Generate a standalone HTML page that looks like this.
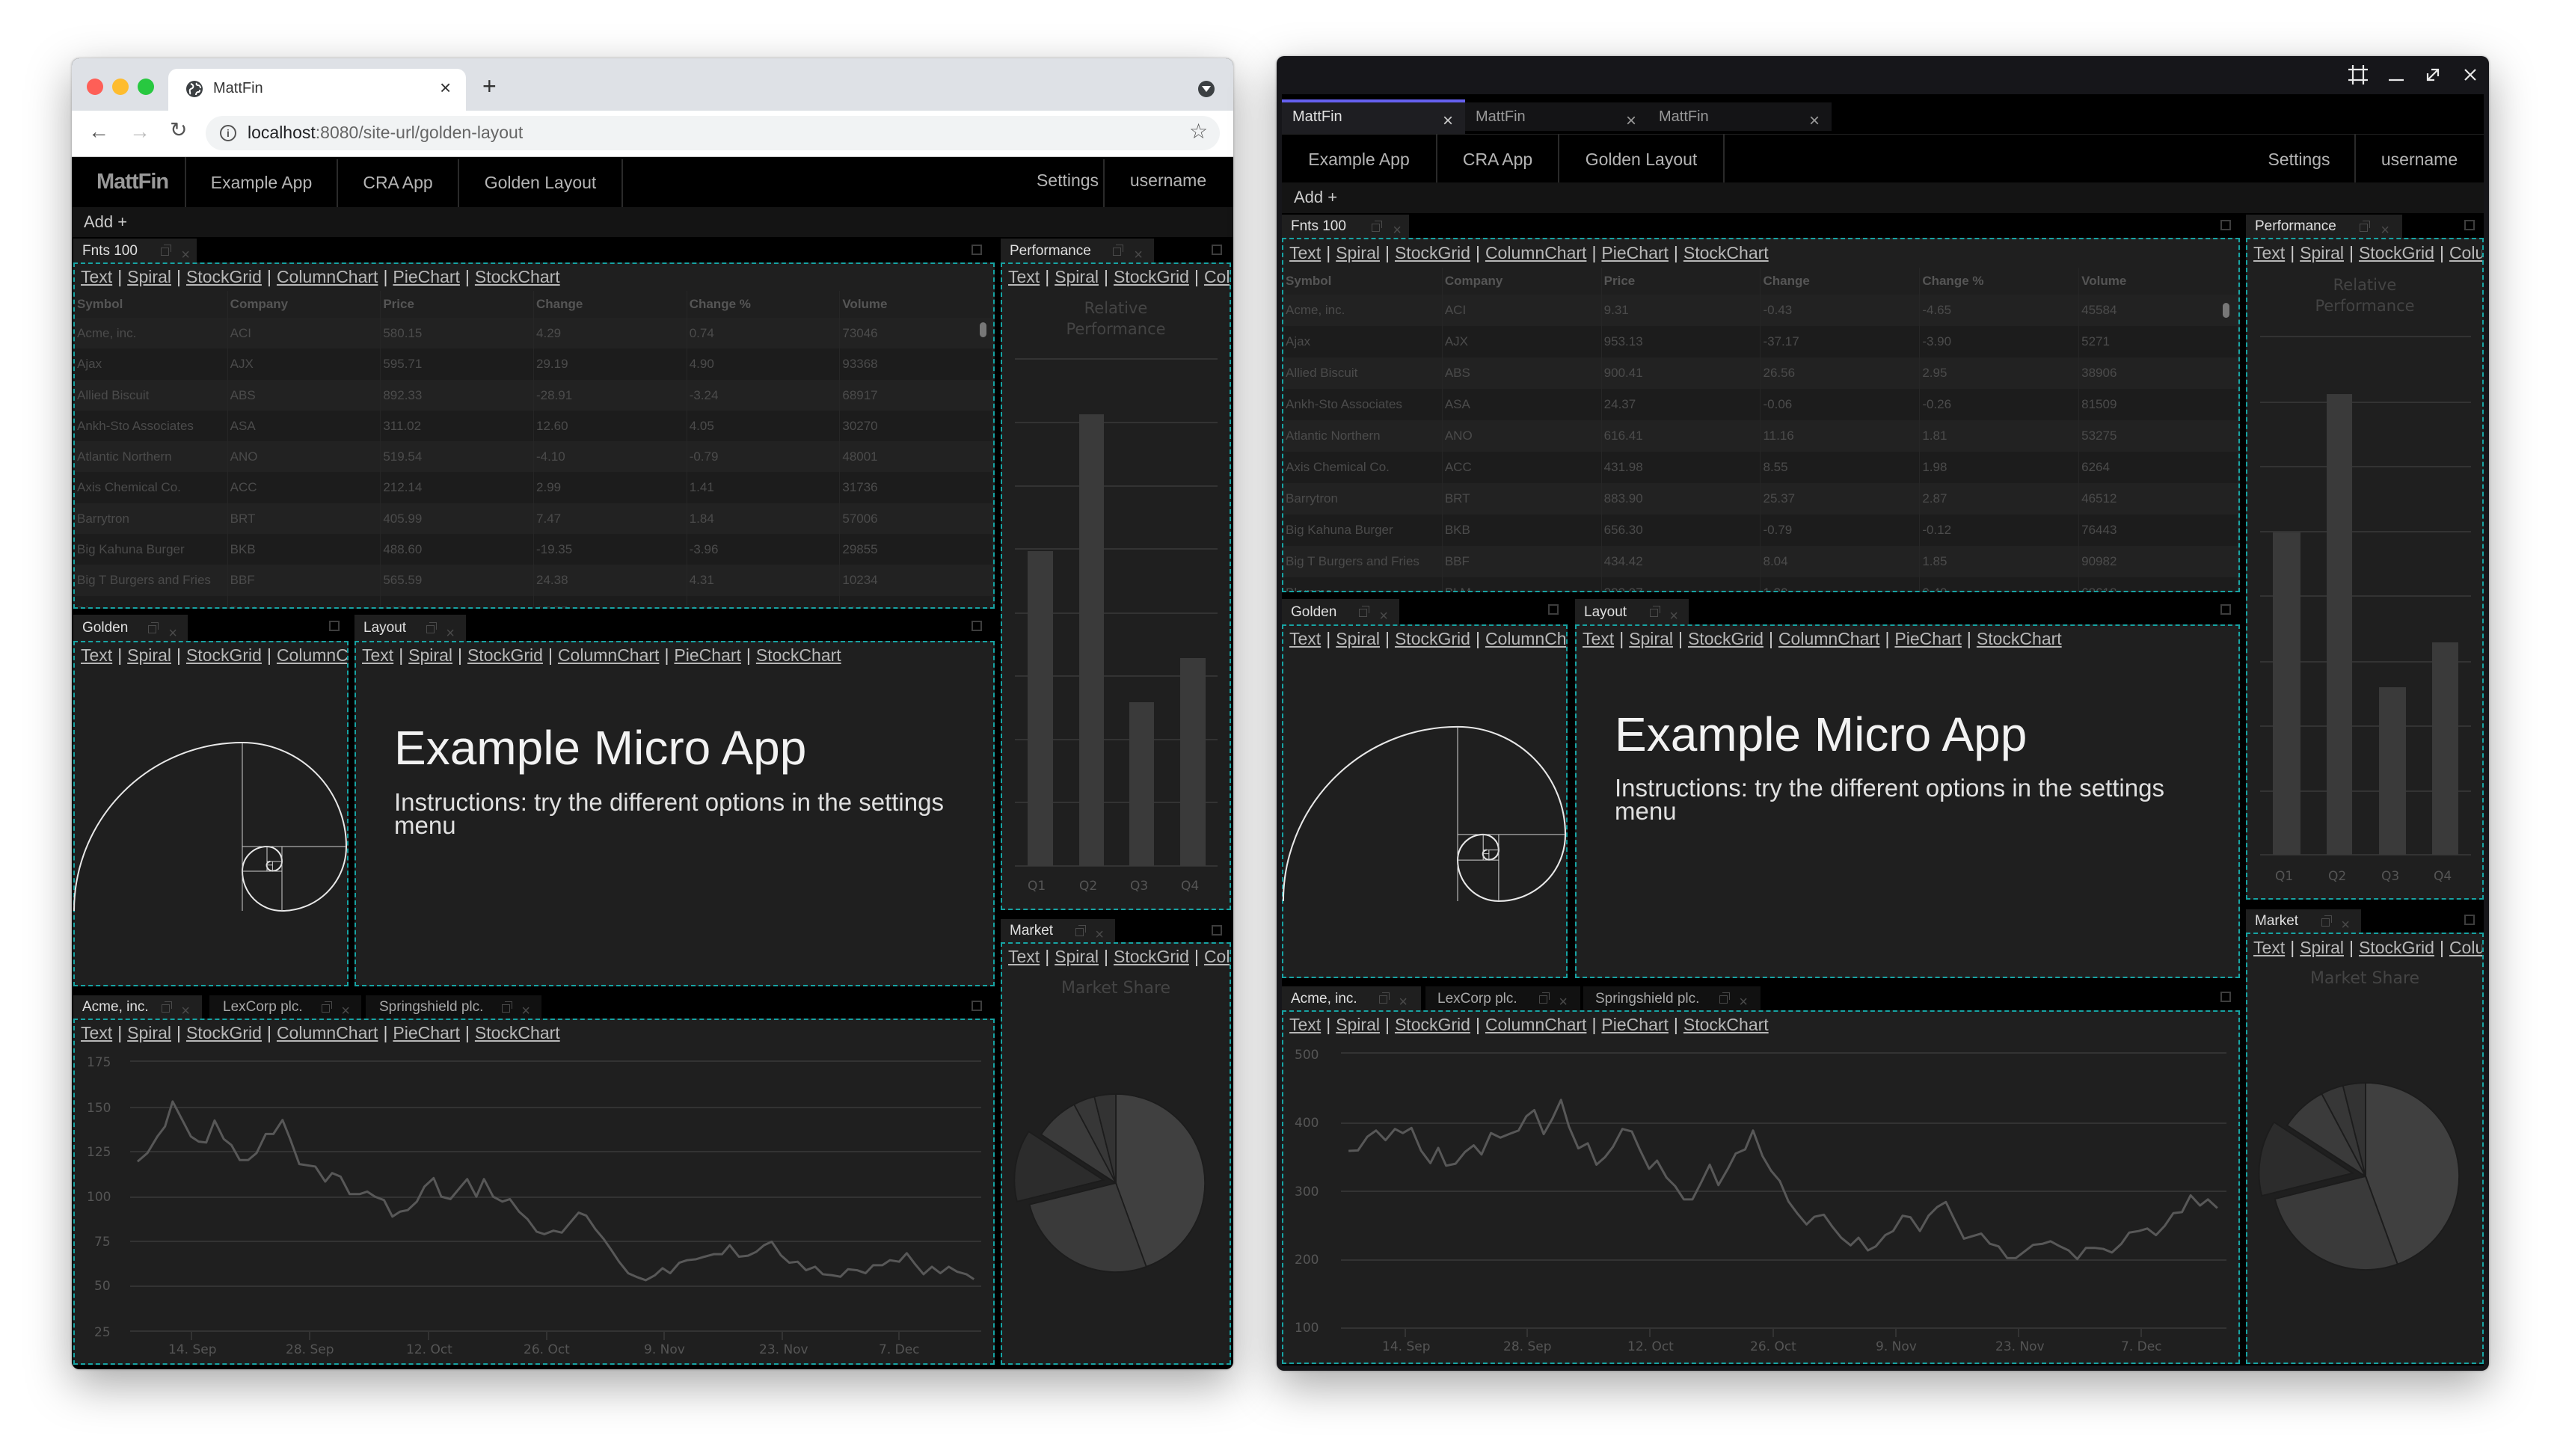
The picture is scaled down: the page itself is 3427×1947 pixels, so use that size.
<!DOCTYPE html>
<html><head><meta charset="utf-8"><style>
*{margin:0;padding:0;box-sizing:border-box}
body{width:3427px;height:1947px;background:#fff;position:relative;overflow:hidden;font-family:"Liberation Sans",Arial,sans-serif}
.a{position:absolute}
.t{position:absolute;white-space:nowrap;line-height:1}
.win{position:absolute;overflow:hidden;box-shadow:0 20px 60px rgba(0,0,0,.35),0 0 3px rgba(0,0,0,.3)}
.pc{position:absolute;background:#1f1f1f;border:2px dashed #17a3a3;overflow:hidden}
.tb{position:absolute;background:#1f1f1f;color:#e0e0e0;font-size:19px;padding-left:12px;white-space:nowrap;overflow:hidden}
.tb.in{background:#111;color:#a8a8a8}
.po{position:absolute;width:11px;height:11px;border:1.5px solid #4a4a4a;top:50%;margin-top:-4px}
.po:after{content:"";position:absolute;left:3px;top:-5px;width:9px;height:9px;border-top:1.5px solid #4a4a4a;border-right:1.5px solid #4a4a4a}
.xx{position:absolute;color:#4a4a4a;font-size:20px;top:50%;margin-top:-11px}
.mx{position:absolute;width:14px;height:14px;border:2px solid #3d3d3d}
.lk{position:absolute;left:8px;top:4px;font-size:23px;line-height:26px;color:#b8b8b8;white-space:nowrap}
.lk u{text-decoration:underline}
.lk s{text-decoration:none;margin:0 7px;color:#ccc}
.nav{position:absolute;color:#b5b5b5;font-size:23px;white-space:nowrap;text-align:center}
.sep{position:absolute;width:2px;background:#2a2a2a}
.grid{position:absolute;left:0;right:0;top:36px;font-size:17px;color:#4b4b4b}
.grid .r{display:flex;height:41.3px;line-height:41.3px}
.grid .r:nth-child(odd){background:#1c1c1c}
.grid .r:nth-child(even){background:#222}
.grid .r.h{height:36px;line-height:36px;background:#1f1f1f;color:#555;font-weight:bold}
.grid .r span{flex:1;padding-left:3px;border-right:1px solid #262626;white-space:nowrap;overflow:hidden}
.g2 .r{height:42px;line-height:42px}
.emt{position:absolute;left:51px;font-size:64px;color:#f2f2f2;white-space:nowrap}
.ins{position:absolute;left:51px;width:780px;font-size:33px;line-height:31px;color:#e0e0e0}
.rp{position:absolute;left:0;right:0;text-align:center;font-family:"DejaVu Sans",sans-serif;font-size:21px;line-height:28px;color:#444}
.ax{position:absolute;font-family:"DejaVu Sans",sans-serif;font-size:17px;color:#555;white-space:nowrap}
</style></head><body>

<!-- ================= LEFT WINDOW ================= -->
<div class="win" style="left:96px;top:78px;width:1553px;height:1753px;border-radius:10px;background:#000"></div>
<div class="a" style="left:96px;top:78px;width:1553px;height:70px;background:#dee1e6;border-radius:10px 10px 0 0"></div>
<div class="a" style="left:116px;top:105px;width:22px;height:22px;border-radius:50%;background:#fe5f57"></div>
<div class="a" style="left:150px;top:105px;width:22px;height:22px;border-radius:50%;background:#febc2e"></div>
<div class="a" style="left:184px;top:105px;width:22px;height:22px;border-radius:50%;background:#28c840"></div>
<div class="a" style="left:225px;top:92px;width:398px;height:56px;background:#fff;border-radius:12px 12px 0 0"></div>
<svg class="a" style="left:247px;top:106px" width="26" height="26" viewBox="0 0 26 26"><circle cx="13" cy="13" r="11" fill="#3c4043"/><path d="M8 6c3 1 4 3 3 5s-3 1-4 3 1 4 0 6M16 5c-1 2 0 3 2 3s3 2 3 4M15 21c0-2 1-4 3-4s2-1 2-3" stroke="#fff" stroke-width="2" fill="none"/></svg>
<div class="t" style="left:285px;top:108px;font-size:20px;color:#333">MattFin</div>
<div class="t" style="left:588px;top:104px;font-size:26px;color:#333">×</div>
<div class="t" style="left:645px;top:99px;font-size:32px;color:#333">+</div>
<div class="a" style="left:1602px;top:108px;width:22px;height:22px;border-radius:50%;background:#3c4043"></div>
<div class="a" style="left:1607px;top:115px;width:0;height:0;border-left:6px solid transparent;border-right:6px solid transparent;border-top:8px solid #fff"></div>
<div class="a" style="left:96px;top:148px;width:1553px;height:62px;background:#fff;border-bottom:1px solid #ccc"></div>
<div class="t" style="left:118px;top:162px;font-size:28px;color:#555">←</div>
<div class="t" style="left:173px;top:162px;font-size:28px;color:#bbb">→</div>
<div class="t" style="left:227px;top:160px;font-size:28px;color:#555">↻</div>
<div class="a" style="left:275px;top:155px;width:1356px;height:46px;background:#f1f3f4;border-radius:23px"></div>
<div class="a" style="left:294px;top:167px;width:22px;height:22px;border-radius:50%;border:2px solid #555;color:#555;font-size:14px;text-align:center;line-height:18px;font-weight:bold">i</div>
<div class="t" style="left:331px;top:166px;font-size:23px;color:#202124">localhost<span style="color:#666">:8080/site-url/golden-layout</span></div>
<div class="t" style="left:1590px;top:162px;font-size:28px;color:#555">☆</div>
<!-- nav -->
<div class="a" style="left:96px;top:210px;width:1553px;height:67px;background:#000"></div>
<div class="t" style="left:129px;top:229px;font-size:29px;font-weight:bold;color:#999;font-family:'Liberation Sans Narrow','Liberation Sans',sans-serif;letter-spacing:-1px">MattFin</div>
<div class="sep" style="left:247px;top:210px;height:67px"></div>
<div class="sep" style="left:450px;top:213px;height:64px"></div>
<div class="sep" style="left:612px;top:213px;height:64px"></div>
<div class="sep" style="left:831px;top:213px;height:64px"></div>
<div class="sep" style="left:1475px;top:213px;height:64px"></div>
<div class="nav" style="left:249px;width:201px;top:231px">Example App</div>
<div class="nav" style="left:452px;width:160px;top:231px">CRA App</div>
<div class="nav" style="left:614px;width:217px;top:231px">Golden Layout</div>
<div class="nav" style="left:1380px;width:95px;top:228px">Settings</div>
<div class="nav" style="left:1477px;width:170px;top:228px">username</div>
<div class="a" style="left:96px;top:277px;width:1553px;height:40px;background:#141414"></div>
<div class="t" style="left:112px;top:286px;font-size:22px;color:#ccc">Add +</div>

<!-- left panels -->
<div class="tb" style="left:98px;top:319px;width:165px;height:32px;line-height:34px">Fnts 100<i class="po" style="left:117px"></i><i class="xx" style="left:144px">×</i></div>
<div class="mx" style="left:1299px;top:327px"></div>
<div class="pc" style="left:98px;top:351px;width:1232px;height:463px">
<div class="lk"><u>Text</u><s>|</s><u>Spiral</u><s>|</s><u>StockGrid</u><s>|</s><u>ColumnChart</u><s>|</s><u>PieChart</u><s>|</s><u>StockChart</u></div>
<div class="grid">
<div class="r h"><span>Symbol</span><span>Company</span><span>Price</span><span>Change</span><span>Change %</span><span>Volume</span></div>
<div class="r"><span>Acme, inc.</span><span>ACI</span><span>580.15</span><span>4.29</span><span>0.74</span><span>73046</span></div>
<div class="r"><span>Ajax</span><span>AJX</span><span>595.71</span><span>29.19</span><span>4.90</span><span>93368</span></div>
<div class="r"><span>Allied Biscuit</span><span>ABS</span><span>892.33</span><span>-28.91</span><span>-3.24</span><span>68917</span></div>
<div class="r"><span>Ankh-Sto Associates</span><span>ASA</span><span>311.02</span><span>12.60</span><span>4.05</span><span>30270</span></div>
<div class="r"><span>Atlantic Northern</span><span>ANO</span><span>519.54</span><span>-4.10</span><span>-0.79</span><span>48001</span></div>
<div class="r"><span>Axis Chemical Co.</span><span>ACC</span><span>212.14</span><span>2.99</span><span>1.41</span><span>31736</span></div>
<div class="r"><span>Barrytron</span><span>BRT</span><span>405.99</span><span>7.47</span><span>1.84</span><span>57006</span></div>
<div class="r"><span>Big Kahuna Burger</span><span>BKB</span><span>488.60</span><span>-19.35</span><span>-3.96</span><span>29855</span></div>
<div class="r"><span>Big T Burgers and Fries</span><span>BBF</span><span>565.59</span><span>24.38</span><span>4.31</span><span>10234</span></div>
<div class="r"><span>Blammo</span><span>BLM</span><span>285.08</span><span>27.75</span><span>4.35</span><span>60099</span></div>
</div>
<div class="a" style="left:1210px;top:78px;width:9px;height:20px;border-radius:5px;background:#777"></div>
</div>

<div class="tb" style="left:1338px;top:319px;width:205px;height:32px;line-height:34px">Performance<i class="po" style="left:150px"></i><i class="xx" style="left:178px">×</i></div>
<div class="mx" style="left:1620px;top:327px"></div>
<div class="pc" style="left:1338px;top:351px;width:308px;height:866px">
<div class="lk"><u>Text</u><s>|</s><u>Spiral</u><s>|</s><u>StockGrid</u><s>|</s><u>ColumnChart</u></div>
<div class="rp" style="top:45px">Relative<br>Performance</div>
<div class="ax" style="left:34px;top:822px">Q1</div><div class="ax" style="left:103px;top:822px">Q2</div><div class="ax" style="left:171px;top:822px">Q3</div><div class="ax" style="left:239px;top:822px">Q4</div>
</div>

<div class="tb" style="left:98px;top:822px;width:153px;height:35px;line-height:36px">Golden<i class="po" style="left:100px"></i><i class="xx" style="left:127px">×</i></div>
<div class="mx" style="left:440px;top:830px"></div>
<div class="pc" style="left:98px;top:857px;width:368px;height:462px">
<div class="lk"><u>Text</u><s>|</s><u>Spiral</u><s>|</s><u>StockGrid</u><s>|</s><u>ColumnChart</u></div>
</div>
<div class="tb" style="left:474px;top:822px;width:149px;height:35px;line-height:36px">Layout<i class="po" style="left:96px"></i><i class="xx" style="left:122px">×</i></div>
<div class="mx" style="left:1299px;top:830px"></div>
<div class="pc" style="left:474px;top:857px;width:856px;height:462px">
<div class="lk"><u>Text</u><s>|</s><u>Spiral</u><s>|</s><u>StockGrid</u><s>|</s><u>ColumnChart</u><s>|</s><u>PieChart</u><s>|</s><u>StockChart</u></div>
<div class="emt" style="top:104px">Example Micro App</div>
<div class="ins" style="top:198px">Instructions: try the different options in the settings menu</div>
</div>

<div class="tb" style="left:98px;top:1331px;width:172px;height:31px;line-height:32px">Acme, inc.<i class="po" style="left:118px"></i><i class="xx" style="left:144px">×</i></div>
<div class="tb in" style="left:280px;top:1331px;width:203px;height:31px;line-height:32px;padding-left:18px">LexCorp plc.<i class="po" style="left:150px"></i><i class="xx" style="left:176px">×</i></div>
<div class="tb in" style="left:489px;top:1331px;width:235px;height:31px;line-height:32px;padding-left:18px">Springshield plc.<i class="po" style="left:182px"></i><i class="xx" style="left:208px">×</i></div>
<div class="mx" style="left:1299px;top:1338px"></div>
<div class="pc" style="left:98px;top:1362px;width:1232px;height:463px">
<div class="lk"><u>Text</u><s>|</s><u>Spiral</u><s>|</s><u>StockGrid</u><s>|</s><u>ColumnChart</u><s>|</s><u>PieChart</u><s>|</s><u>StockChart</u></div>
</div>
<div class="ax" style="left:116px;top:1411px">175</div><div class="ax" style="left:116px;top:1472px">150</div><div class="ax" style="left:116px;top:1531px">125</div><div class="ax" style="left:116px;top:1591px">100</div><div class="ax" style="left:126px;top:1651px">75</div><div class="ax" style="left:126px;top:1710px">50</div><div class="ax" style="left:126px;top:1772px">25</div>
<div class="ax" style="left:225px;top:1795px">14. Sep</div><div class="ax" style="left:382px;top:1795px">28. Sep</div><div class="ax" style="left:543px;top:1795px">12. Oct</div><div class="ax" style="left:700px;top:1795px">26. Oct</div><div class="ax" style="left:861px;top:1795px">9. Nov</div><div class="ax" style="left:1015px;top:1795px">23. Nov</div><div class="ax" style="left:1175px;top:1795px">7. Dec</div>

<div class="tb" style="left:1338px;top:1229px;width:153px;height:31px;line-height:32px">Market<i class="po" style="left:100px"></i><i class="xx" style="left:126px">×</i></div>
<div class="mx" style="left:1620px;top:1237px"></div>
<div class="pc" style="left:1338px;top:1260px;width:308px;height:565px">
<div class="lk"><u>Text</u><s>|</s><u>Spiral</u><s>|</s><u>StockGrid</u><s>|</s><u>ColumnChart</u></div>
<div class="rp" style="top:46px;font-size:22px">Market Share</div>
</div>

<!-- ================= RIGHT WINDOW ================= -->
<div class="win" style="left:1707px;top:75px;width:1621px;height:1758px;border-radius:10px;background:#16161a"></div>
<div class="a" style="left:1714px;top:126px;width:1607px;height:1700px;background:#000"></div>
<svg class="a" style="left:3138px;top:85px" width="180" height="30" viewBox="0 0 180 30"><g stroke="#e8e8e8" stroke-width="2.2" fill="none"><path d="M8 2v26M22 2v26M2 8h26M2 22h26"/><path d="M56 22h20"/><path d="M108 22l14-14M113 8h9v9M108 13v9h9"/><path d="M158 8l14 14M172 8l-14 14"/></g></svg>
<div class="a" style="left:1714px;top:133px;width:245px;height:46px;background:#1e1e22;border-top:4px solid #6560f0"></div>
<div class="a" style="left:1959px;top:137px;width:490px;height:38px;background:#141416"></div>
<div class="t" style="left:1728px;top:146px;font-size:20px;color:#e0e0e0">MattFin</div>
<div class="t" style="left:1929px;top:150px;font-size:24px;color:#ccc">×</div>
<div class="t" style="left:1973px;top:146px;font-size:20px;color:#999">MattFin</div>
<div class="t" style="left:2174px;top:150px;font-size:24px;color:#999">×</div>
<div class="t" style="left:2218px;top:146px;font-size:20px;color:#999">MattFin</div>
<div class="t" style="left:2419px;top:150px;font-size:24px;color:#999">×</div>
<div class="a" style="left:1714px;top:179px;width:1607px;height:65px;background:#000;border-top:1px solid #222"></div>
<div class="sep" style="left:1920px;top:179px;height:65px"></div>
<div class="sep" style="left:2083px;top:179px;height:65px"></div>
<div class="sep" style="left:2304px;top:179px;height:65px"></div>
<div class="sep" style="left:3148px;top:179px;height:65px"></div>
<div class="nav" style="left:1714px;width:206px;top:200px">Example App</div>
<div class="nav" style="left:1922px;width:161px;top:200px">CRA App</div>
<div class="nav" style="left:2085px;width:219px;top:200px">Golden Layout</div>
<div class="nav" style="left:3010px;width:128px;top:200px">Settings</div>
<div class="nav" style="left:3150px;width:170px;top:200px">username</div>
<div class="a" style="left:1714px;top:244px;width:1607px;height:41px;background:#141414"></div>
<div class="t" style="left:1730px;top:253px;font-size:22px;color:#ccc">Add +</div>

<div class="tb" style="left:1714px;top:287px;width:170px;height:31px;line-height:32px">Fnts 100<i class="po" style="left:120px"></i><i class="xx" style="left:148px">×</i></div>
<div class="mx" style="left:2969px;top:294px"></div>
<div class="pc" style="left:1714px;top:318px;width:1281px;height:474px">
<div class="lk" style="top:5px"><u>Text</u><s>|</s><u>Spiral</u><s>|</s><u>StockGrid</u><s>|</s><u>ColumnChart</u><s>|</s><u>PieChart</u><s>|</s><u>StockChart</u></div>
<div class="grid g2" style="top:38px">
<div class="r h"><span>Symbol</span><span>Company</span><span>Price</span><span>Change</span><span>Change %</span><span>Volume</span></div>
<div class="r"><span>Acme, inc.</span><span>ACI</span><span>9.31</span><span>-0.43</span><span>-4.65</span><span>45584</span></div>
<div class="r"><span>Ajax</span><span>AJX</span><span>953.13</span><span>-37.17</span><span>-3.90</span><span>5271</span></div>
<div class="r"><span>Allied Biscuit</span><span>ABS</span><span>900.41</span><span>26.56</span><span>2.95</span><span>38906</span></div>
<div class="r"><span>Ankh-Sto Associates</span><span>ASA</span><span>24.37</span><span>-0.06</span><span>-0.26</span><span>81509</span></div>
<div class="r"><span>Atlantic Northern</span><span>ANO</span><span>616.41</span><span>11.16</span><span>1.81</span><span>53275</span></div>
<div class="r"><span>Axis Chemical Co.</span><span>ACC</span><span>431.98</span><span>8.55</span><span>1.98</span><span>6264</span></div>
<div class="r"><span>Barrytron</span><span>BRT</span><span>883.90</span><span>25.37</span><span>2.87</span><span>46512</span></div>
<div class="r"><span>Big Kahuna Burger</span><span>BKB</span><span>656.30</span><span>-0.79</span><span>-0.12</span><span>76443</span></div>
<div class="r"><span>Big T Burgers and Fries</span><span>BBF</span><span>434.42</span><span>8.04</span><span>1.85</span><span>90982</span></div>
<div class="r"><span>Blammo</span><span>BLM</span><span>323.97</span><span>1.30</span><span>0.40</span><span>68618</span></div>
</div>
<div class="a" style="left:1256px;top:85px;width:9px;height:20px;border-radius:5px;background:#777"></div>
</div>

<div class="tb" style="left:3003px;top:287px;width:209px;height:31px;line-height:32px">Performance<i class="po" style="left:152px"></i><i class="xx" style="left:180px">×</i></div>
<div class="mx" style="left:3295px;top:294px"></div>
<div class="pc" style="left:3003px;top:318px;width:318px;height:885px">
<div class="lk" style="top:5px"><u>Text</u><s>|</s><u>Spiral</u><s>|</s><u>StockGrid</u><s>|</s><u>ColumnChart</u></div>
<div class="rp" style="top:47px">Relative<br>Performance</div>
<div class="ax" style="left:37px;top:842px">Q1</div><div class="ax" style="left:108px;top:842px">Q2</div><div class="ax" style="left:179px;top:842px">Q3</div><div class="ax" style="left:249px;top:842px">Q4</div>
</div>

<div class="tb" style="left:1714px;top:801px;width:157px;height:34px;line-height:35px">Golden<i class="po" style="left:103px"></i><i class="xx" style="left:130px">×</i></div>
<div class="mx" style="left:2070px;top:808px"></div>
<div class="pc" style="left:1714px;top:835px;width:382px;height:473px">
<div class="lk"><u>Text</u><s>|</s><u>Spiral</u><s>|</s><u>StockGrid</u><s>|</s><u>ColumnChart</u></div>
</div>
<div class="tb" style="left:2106px;top:801px;width:152px;height:34px;line-height:35px">Layout<i class="po" style="left:100px"></i><i class="xx" style="left:126px">×</i></div>
<div class="mx" style="left:2969px;top:808px"></div>
<div class="pc" style="left:2106px;top:835px;width:889px;height:473px">
<div class="lk"><u>Text</u><s>|</s><u>Spiral</u><s>|</s><u>StockGrid</u><s>|</s><u>ColumnChart</u><s>|</s><u>PieChart</u><s>|</s><u>StockChart</u></div>
<div class="emt" style="top:108px">Example Micro App</div>
<div class="ins" style="top:201px">Instructions: try the different options in the settings menu</div>
</div>

<div class="tb" style="left:1714px;top:1319px;width:186px;height:32px;line-height:33px">Acme, inc.<i class="po" style="left:130px"></i><i class="xx" style="left:156px">×</i></div>
<div class="tb in" style="left:1906px;top:1319px;width:207px;height:32px;line-height:33px;padding-left:16px">LexCorp plc.<i class="po" style="left:152px"></i><i class="xx" style="left:178px">×</i></div>
<div class="tb in" style="left:2117px;top:1319px;width:237px;height:32px;line-height:33px;padding-left:16px">Springshield plc.<i class="po" style="left:182px"></i><i class="xx" style="left:208px">×</i></div>
<div class="mx" style="left:2969px;top:1326px"></div>
<div class="pc" style="left:1714px;top:1351px;width:1281px;height:473px">
<div class="lk"><u>Text</u><s>|</s><u>Spiral</u><s>|</s><u>StockGrid</u><s>|</s><u>ColumnChart</u><s>|</s><u>PieChart</u><s>|</s><u>StockChart</u></div>
</div>
<div class="ax" style="left:1731px;top:1401px">500</div><div class="ax" style="left:1731px;top:1492px">400</div><div class="ax" style="left:1731px;top:1584px">300</div><div class="ax" style="left:1731px;top:1675px">200</div><div class="ax" style="left:1731px;top:1766px">100</div>
<div class="ax" style="left:1848px;top:1791px">14. Sep</div><div class="ax" style="left:2010px;top:1791px">28. Sep</div><div class="ax" style="left:2176px;top:1791px">12. Oct</div><div class="ax" style="left:2340px;top:1791px">26. Oct</div><div class="ax" style="left:2508px;top:1791px">9. Nov</div><div class="ax" style="left:2668px;top:1791px">23. Nov</div><div class="ax" style="left:2836px;top:1791px">7. Dec</div>

<div class="tb" style="left:3003px;top:1216px;width:154px;height:31px;line-height:32px">Market<i class="po" style="left:101px"></i><i class="xx" style="left:127px">×</i></div>
<div class="mx" style="left:3295px;top:1223px"></div>
<div class="pc" style="left:3003px;top:1247px;width:318px;height:577px">
<div class="lk" style="top:5px"><u>Text</u><s>|</s><u>Spiral</u><s>|</s><u>StockGrid</u><s>|</s><u>ColumnChart</u></div>
<div class="rp" style="top:46px;font-size:22px">Market Share</div>
</div>

<!-- ===== graphics overlay (page coords) ===== -->
<svg class="a" style="left:0;top:0" width="3427" height="1947" viewBox="0 0 3427 1947">
<defs>
<g id="spiral" fill="none" stroke="#e8e8e8">
<path stroke-width="2" d="M-225 0A225 225 0 0 1 0 -225A139 139 0 0 1 139 -86A86 86 0 0 1 53 0A53 53 0 0 1 0 -53A33 33 0 0 1 33 -86A20 20 0 0 1 53 -66A12.6 12.6 0 0 1 40.4 -53.4A7.8 7.8 0 0 1 32.6 -61.2A4.8 4.8 0 0 1 37.4 -66"/>
<path stroke-width="1" stroke="#cfcfcf" d="M0 -225V0M0 -86H139M53 -86V0M0 -53H53M33 -86V-53M33 -66H53M40.4 -66V-53M32.6 -61.2H40.4"/>
</g>
<g id="pie" stroke="#1c1c1c" stroke-width="1.5">
<path fill="#404040" d="M0 0L0 -100A100 100 0 0 1 34.2 94Z"/>
<path fill="#3a3a3a" d="M0 0L34.2 94A100 100 0 0 1 -97 24.2Z"/>
<path fill="#2c2c2c" transform="translate(-14 -3.4)" d="M0 0L-97 24.2A100 100 0 0 1 -83.9 -54.5Z"/>
<path fill="#3b3b3b" d="M0 0L-83.9 -54.5A100 100 0 0 1 -46.9 -88.3Z"/>
<path fill="#373737" d="M0 0L-46.9 -88.3A100 100 0 0 1 -24.2 -97Z"/>
<path fill="#333" d="M0 0L-24.2 -97A100 100 0 0 1 0 -100Z"/>
</g>
</defs>
<use href="#spiral" transform="translate(324 1218)"/>
<use href="#spiral" transform="translate(1949 1205) scale(1.036)"/>
<g stroke="#333" stroke-width="2"><path d="M1357 480H1628M1357 565H1628M1357 650H1628M1357 734H1628M1357 820H1628M1357 904H1628M1357 989H1628M1357 1073H1628M1357 1158H1628"/></g>
<g fill="#3a3a3a"><rect x="1374" y="737" width="34" height="421"/><rect x="1443" y="554" width="33" height="604"/><rect x="1510" y="939" width="33" height="219"/><rect x="1578" y="880" width="34" height="278"/></g>
<g stroke="#333" stroke-width="2"><path d="M3022 450H3304M3022 538H3304M3022 624H3304M3022 711H3304M3022 797H3304M3022 885H3304M3022 971H3304M3022 1058H3304M3022 1143H3304"/></g>
<g fill="#3a3a3a"><rect x="3039" y="712" width="37" height="431"/><rect x="3111" y="527" width="34" height="616"/><rect x="3181" y="919" width="36" height="224"/><rect x="3252" y="859" width="35" height="284"/></g>
<use href="#pie" transform="translate(1492 1582) scale(1.19)"/>
<use href="#pie" transform="translate(3163 1573) scale(1.25)"/>
<g stroke="#333" stroke-width="2"><path d="M174 1419H1312M174 1481H1312M174 1540H1312M174 1601H1312M174 1660H1312M174 1720H1312M174 1780H1312"/>
<path d="M1793 1408H2977M1793 1502H2977M1793 1593H2977M1793 1685H2977M1793 1776H2977"/>
<path d="M256 1780v12M414 1780v12M573 1780v12M731 1780v12M888 1780v12M1046 1780v12M1202 1780v12M1879 1776v12M2042 1776v12M2206 1776v12M2371 1776v12M2535 1776v12M2699 1776v12M2863 1776v12"/></g>
</svg>
<svg class="a" style="left:90px;top:820px" width="1600" height="1050" viewBox="0 0 1568 1568" preserveAspectRatio="none">
<polyline vector-effect="non-scaling-stroke" fill="none" stroke="#585858" stroke-width="3" stroke-linejoin="round" points="92,1095 105,1078 118,1045 128,1025 138,975 150,1010 162,1045 172,1055 182,1057 193,1013 205,1050 215,1062 226,1092 237,1092 248,1078 260,1040 270,1040 282,1012 292,1050 304,1100 325,1105 338,1135 347,1118 358,1125 370,1160 383,1160 393,1155 403,1165 415,1172 426,1205 436,1195 446,1192 458,1175 468,1145 480,1128 490,1165 502,1170 514,1148 524,1130 536,1165 546,1130 558,1165 570,1175 580,1170 592,1195 603,1210 615,1235 625,1240 637,1233 648,1237 660,1215 670,1197 680,1203 692,1230 703,1250 713,1272 723,1295 735,1318 747,1326 758,1332 770,1322 780,1308 790,1318 802,1297 812,1292 824,1290 835,1285 847,1280 858,1280 868,1262 880,1285 892,1283 903,1275 913,1262 923,1255 935,1282 946,1297 957,1295 968,1312 980,1305 990,1320 1002,1322 1013,1325 1023,1310 1035,1312 1046,1318 1056,1302 1068,1302 1078,1292 1090,1295 1100,1278 1111,1300 1122,1320 1133,1305 1144,1318 1155,1305 1166,1315 1178,1320 1188,1330"/>
</svg>
<svg class="a" style="left:1700px;top:800px" width="1650" height="1070" viewBox="0 0 1568 1568" preserveAspectRatio="none">
<polyline vector-effect="non-scaling-stroke" fill="none" stroke="#585858" stroke-width="3" stroke-linejoin="round" points="98,1083 110,1082 122,1055 133,1043 145,1062 157,1040 167,1048 178,1038 190,1082 202,1107 212,1077 222,1112 234,1108 246,1085 257,1072 267,1090 279,1048 291,1057 302,1050 314,1043 324,1015 334,1003 346,1050 357,1020 368,983 378,1035 390,1078 402,1068 413,1110 424,1095 434,1075 446,1040 458,1045 468,1080 480,1118 490,1102 502,1135 513,1152 524,1178 535,1178 546,1145 557,1110 568,1150 580,1118 590,1088 602,1080 612,1043 624,1093 635,1122 646,1142 657,1182 668,1205 680,1227 690,1212 702,1208 713,1232 724,1253 736,1268 746,1253 758,1278 768,1270 780,1248 790,1240 802,1210 812,1213 824,1240 835,1210 846,1193 857,1183 868,1218 880,1255 891,1250 902,1245 913,1265 924,1270 935,1293 946,1293 957,1280 968,1267 980,1265 990,1260 1002,1270 1013,1278 1024,1295 1035,1273 1046,1273 1057,1275 1068,1282 1080,1265 1090,1243 1102,1240 1113,1235 1124,1248 1135,1230 1146,1205 1157,1203 1168,1170 1180,1190 1190,1178 1202,1195"/>
</svg>
</body></html>
